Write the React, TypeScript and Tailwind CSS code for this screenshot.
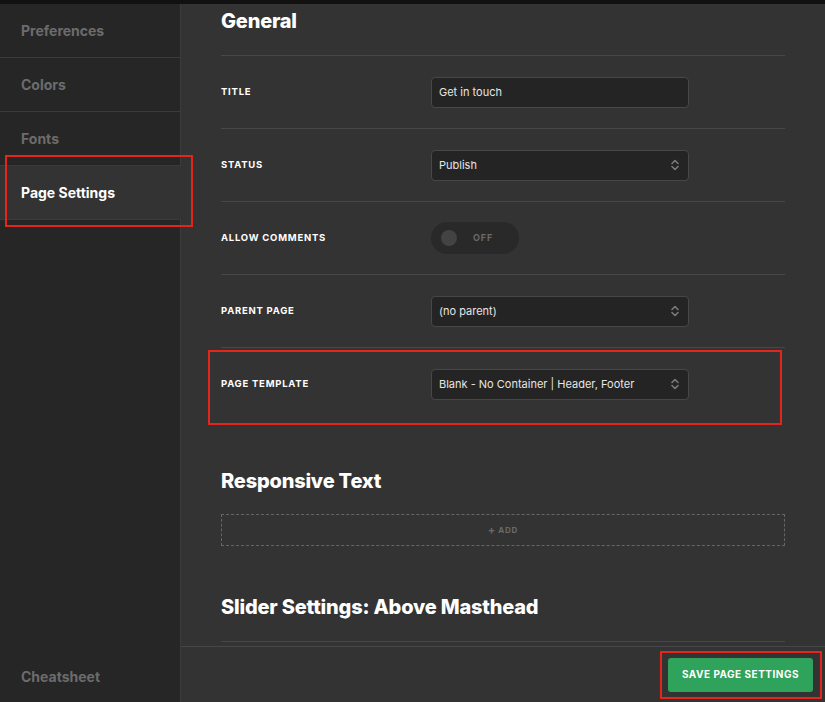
import React from 'react';

const navItems = ['Preferences', 'Colors', 'Fonts'];

const SelectArrows: React.FC = () => (
  <svg width="8" height="12" viewBox="0 0 8 12" className="shrink-0">
    <polyline points="1,4.5 4,1.5 7,4.5" fill="none" stroke="#7a7a7a" strokeWidth="1.6" strokeLinejoin="round" strokeLinecap="round" />
    <polyline points="1,7.5 4,10.5 7,7.5" fill="none" stroke="#7a7a7a" strokeWidth="1.6" strokeLinejoin="round" strokeLinecap="round" />
  </svg>
);

const Field: React.FC<{ value: string; select?: boolean }> = ({ value, select }) => (
  <div className="w-[258px] h-[31px] flex items-center justify-between rounded-[4px] border border-[#474747] bg-[#242424] pl-[7px] pr-[9px]">
    <span className="text-[11px] text-[#e6e6e6]">{value}</span>
    {select && <SelectArrows />}
  </div>
);

const Row: React.FC<{ label: string; children: React.ReactNode }> = ({ label, children }) => (
  <div className="h-[73px] border-t border-[#474747] flex items-center">
    <div className="w-[210px] text-[9.5px] font-bold uppercase tracking-[0.08em] text-white">{label}</div>
    {children}
  </div>
);

const Heading: React.FC<{ children: React.ReactNode }> = ({ children }) => (
  <h2 className="text-[20px] leading-[28px] font-extrabold tracking-[-0.01em] text-white">{children}</h2>
);

const App: React.FC = () => {
  return (
    <div className="relative w-[825px] h-[702px] overflow-hidden bg-[#111111] pt-[4px] font-['Inter',sans-serif]">
      <div className="flex h-full">
        {/* Sidebar */}
        <div className="w-[181px] shrink-0 flex flex-col bg-[#262626]">
          {navItems.map((item) => (
            <div
              key={item}
              className="h-[54px] flex items-center pl-[21px] border-b border-r border-[#3b3b3b] text-[14px] font-bold text-[#6c6c6c]"
            >
              {item}
            </div>
          ))}
          <div className="h-[54px] flex items-center pl-[21px] border-b border-[#3b3b3b] bg-[#333333] text-[14px] font-bold text-white">
            Page Settings
          </div>
          <div className="flex-1 border-r border-[#3b3b3b] flex flex-col justify-end">
            <div className="h-[52px] flex items-center pl-[21px] text-[14px] font-bold text-[#6c6c6c]">
              Cheatsheet
            </div>
          </div>
        </div>

        {/* Main */}
        <div className="flex-1 flex flex-col bg-[#333333]">
          <div className="flex-1 overflow-hidden px-10">
            <div className="pt-[3px]">
              <Heading>General</Heading>
              <div className="mt-5">
                <Row label="Title">
                  <Field value="Get in touch" />
                </Row>
                <Row label="Status">
                  <Field value="Publish" select />
                </Row>
                <Row label="Allow Comments">
                  <div className="w-[88px] h-[32px] rounded-full bg-[#292929] flex items-center pl-[10px] gap-[16px]">
                    <div className="w-[16px] h-[16px] rounded-full bg-[#434343]" />
                    <span className="text-[9px] font-bold tracking-[0.1em] text-[#6a6a6a]">OFF</span>
                  </div>
                </Row>
                <Row label="Parent Page">
                  <Field value="(no parent)" select />
                </Row>
                <Row label="Page Template">
                  <Field value="Blank - No Container | Header, Footer" select />
                </Row>
              </div>
            </div>

            <div className="mt-[47px]">
              <Heading>Responsive Text</Heading>
              <div className="mt-[19px] h-[32px] border border-dashed border-[#666666] flex items-center justify-center gap-[3px] text-[#6a6a6a]">
                <span className="text-[11px] font-bold leading-none">+</span>
                <span className="text-[8px] font-bold tracking-[0.1em]">ADD</span>
              </div>
            </div>

            <div className="mt-[47px]">
              <Heading>Slider Settings: Above Masthead</Heading>
              <div className="mt-5 border-t border-[#474747]" />
            </div>
          </div>

          {/* Footer */}
          <div className="h-[56px] shrink-0 border-t border-[#474747] flex items-center justify-end pr-3">
            <button className="h-[34px] px-[14px] rounded-[3px] bg-[#2fa35b] text-[10px] font-bold tracking-[0.05em] text-white">
              SAVE PAGE SETTINGS
            </button>
          </div>
        </div>
      </div>

      {/* Annotation boxes */}
      <div className="absolute left-[5px] top-[155px] w-[188px] h-[72px] border-2 border-[#e3261c]" />
      <div className="absolute left-[208px] top-[350px] w-[574px] h-[75px] border-2 border-[#e3261c]" />
      <div className="absolute left-[660px] top-[651px] w-[162px] h-[48px] border-2 border-[#e3261c]" />
    </div>
  );
};

export default App;
